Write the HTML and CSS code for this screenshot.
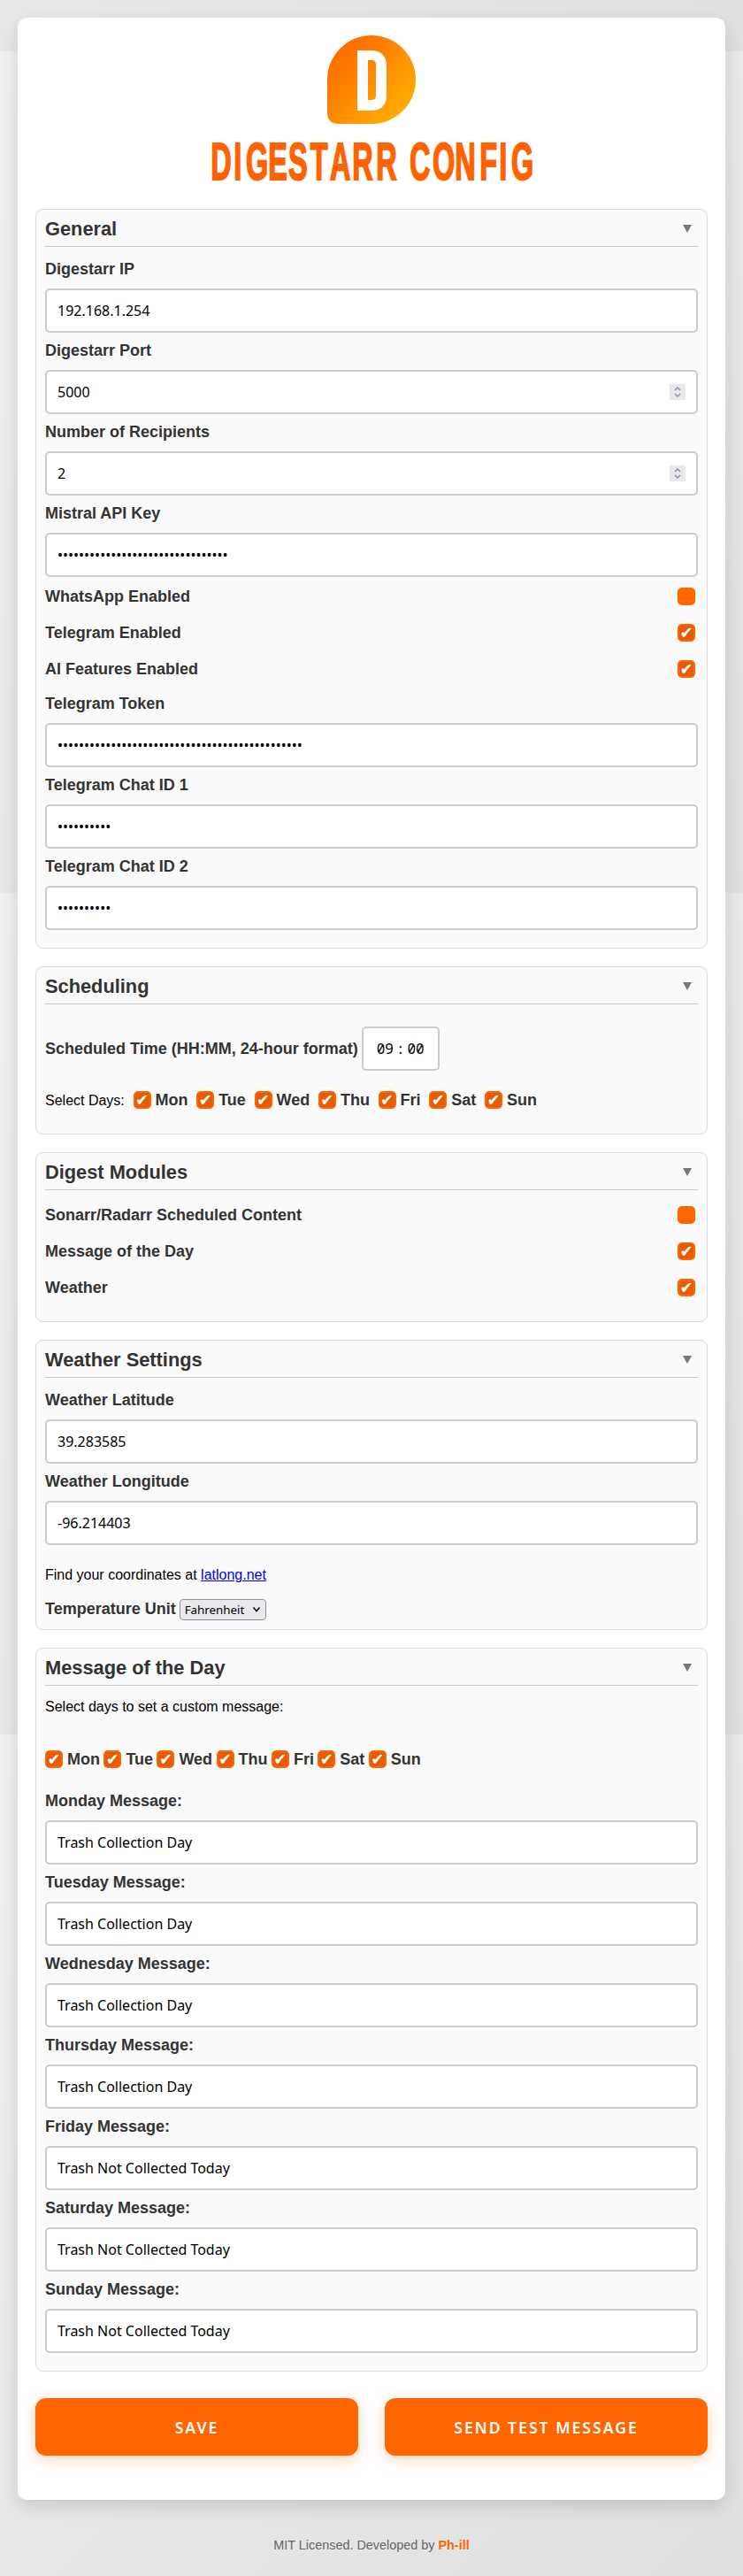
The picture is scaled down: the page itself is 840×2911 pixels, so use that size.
FILE: index.html
```html
<!DOCTYPE html>
<html lang="en">
<head>
<meta charset="utf-8">
<title>Digestarr Config</title>
<link rel="stylesheet" href="styles.css">
</head>
<body>
<main class="card">
  <svg class="logo" viewBox="0 0 100 100" width="100" height="100">
    <defs><linearGradient id="flame" x1="0" y1="0" x2="1" y2="1"><stop offset=".12" stop-color="#ff6a00"/><stop offset=".88" stop-color="#ffae00"/></linearGradient></defs>
    <path d="M50 0A50 50 0 0 1 50 100H13Q0 100 0 87V50A50 50 0 0 1 50 0Z" fill="url(#flame)"/>
    <path fill-rule="evenodd" d="M34 17H49Q67 17 67 35V67Q67 85 49 85H34ZM46 28V73H50Q55 73 55 68V33Q55 28 50 28Z" fill="#fff"/>
  </svg>
  <h1 class="title"><svg class="title-art" width="364" height="70" viewBox="0 -10 364 70"><text class="title-text" transform="scale(.55 1)" y="48" x=".5 47.8 72.7 118.7 160 205 245.5 291.5 340.5 380 409 456.5 502.4 553.3 593.3 618">DIGESTARR CONFIG</text></svg></h1>

  <section class="panel general">
    <h2 class="panel-head">General<span class="arrow"></span></h2>
    <label class="label">Digestarr IP</label><input class="field" value="192.168.1.254">
    <label class="label">Digestarr Port</label>
    <div class="field number">5000<svg class="spin" width="18" height="18"><path d="M6 7l3-3 3 3M6 11l3 3 3-3"/></svg></div>
    <label class="label">Number of Recipients</label>
    <div class="field number">2<svg class="spin" width="18" height="18"><path d="M6 7l3-3 3 3M6 11l3 3 3-3"/></svg></div>
    <label class="label">Mistral API Key</label><input class="field" value="••••••••••••••••••••••••••••••••">
    <div class="toggle"><span>WhatsApp Enabled</span><i class="check off"></i></div>
    <div class="toggle"><span>Telegram Enabled</span><i class="check"></i></div>
    <div class="toggle"><span>AI Features Enabled</span><i class="check"></i></div>
    <label class="label">Telegram Token</label><input class="field" value="••••••••••••••••••••••••••••••••••••••••••••••">
    <label class="label">Telegram Chat ID 1</label><input class="field" value="••••••••••">
    <label class="label">Telegram Chat ID 2</label><input class="field" value="••••••••••">
  </section>

  <section class="panel scheduling">
    <h2 class="panel-head">Scheduling<span class="arrow"></span></h2>
    <div class="time-row"><label>Scheduled Time (HH:MM, 24-hour format)</label><div class="time"><span>09</span><span>:</span><span>00</span></div></div>
    <div class="days spaced"><span class="hint">Select Days:</span>
      <label class="day"><i class="check"></i>Mon</label><label class="day"><i class="check"></i>Tue</label><label class="day"><i class="check"></i>Wed</label><label class="day"><i class="check"></i>Thu</label><label class="day"><i class="check"></i>Fri</label><label class="day"><i class="check"></i>Sat</label><label class="day"><i class="check"></i>Sun</label></div>
  </section>

  <section class="panel modules">
    <h2 class="panel-head">Digest Modules<span class="arrow"></span></h2>
    <div class="toggle"><span>Sonarr/Radarr Scheduled Content</span><i class="check off"></i></div>
    <div class="toggle"><span>Message of the Day</span><i class="check"></i></div>
    <div class="toggle"><span>Weather</span><i class="check"></i></div>
  </section>

  <section class="panel weather">
    <h2 class="panel-head">Weather Settings<span class="arrow"></span></h2>
    <label class="label">Weather Latitude</label><input class="field" value="39.283585">
    <label class="label">Weather Longitude</label><input class="field" value="-96.214403">
    <p class="find">Find your coordinates at <a href="#">latlong.net</a></p>
    <div class="unit"><label>Temperature Unit</label><div class="select">Fahrenheit<svg width="10" height="8"><path d="M1.5 1.5L5 5.5 8.500 1.500"/></svg></div></div>
  </section>

  <section class="panel messages">
    <h2 class="panel-head">Message of the Day<span class="arrow"></span></h2>
    <p class="prompt">Select days to set a custom message:</p>
    <div class="days">
      <label class="day"><i class="check"></i>Mon</label><label class="day"><i class="check"></i>Tue</label><label class="day"><i class="check"></i>Wed</label><label class="day"><i class="check"></i>Thu</label><label class="day"><i class="check"></i>Fri</label><label class="day"><i class="check"></i>Sat</label><label class="day"><i class="check"></i>Sun</label></div>
    <label class="label">Monday Message:</label><input class="field" value="Trash Collection Day">
    <label class="label">Tuesday Message:</label><input class="field" value="Trash Collection Day">
    <label class="label">Wednesday Message:</label><input class="field" value="Trash Collection Day">
    <label class="label">Thursday Message:</label><input class="field" value="Trash Collection Day">
    <label class="label">Friday Message:</label><input class="field" value="Trash Not Collected Today">
    <label class="label">Saturday Message:</label><input class="field" value="Trash Not Collected Today">
    <label class="label">Sunday Message:</label><input class="field" value="Trash Not Collected Today">
  </section>

  <div class="actions"><button class="button">SAVE</button><button class="button">SEND TEST MESSAGE</button></div>
</main>
<footer class="footer">MIT Licensed. Developed by <b>Ph-ill</b></footer>
</body>
</html>
```
FILE: styles.css
```css
* { box-sizing: border-box; }
body {
  margin: 0;
  height: 2911px;
  padding: 20px 20px 0;
  background: linear-gradient(135deg, #f0f0f0, #e0e0e0) 0 58px / 840px 951px repeat;
  font: 16px "Liberation Sans", Arial, sans-serif;
  color: #000;
}
.card {
  display: flex;
  flex-direction: column;
  height: 2805px;
  padding: 20px;
  border-radius: 10px;
  background: #fff;
  box-shadow: 0 8px 20px rgba(0, 0, 0, .13);
}
.logo { align-self: center; flex: none; }
.title { display: flex; justify-content: center; height: 70px; margin: 5px 0 21px; }
.title-art { overflow: visible; }
.title-text { font: bold 59px "Liberation Sans", Arial, sans-serif; fill: #ff6200; stroke: #ff6200; stroke-width: 2; }
.panel {
  flex: none;
  margin-bottom: 20px;
  padding: 0 10px;
  border: 1px solid #ddd;
  border-radius: 8px;
  background: #fafafa;
}
.general { height: 836px; }
.scheduling { height: 190px; }
.modules { height: 192px; }
.weather { height: 328px; }
.messages { height: 818px; margin-bottom: 30px; }
.panel-head {
  display: flex;
  justify-content: space-between;
  align-items: center;
  height: 42px;
  margin: 0 0 5px;
  padding-top: 2px;
  border-bottom: 1px solid #ccc;
  color: #333;
  font-size: 21.8px;
}
.arrow { margin-right: 7px; border: 5px solid transparent; border-top: 9px solid #777; border-bottom: 0; }
.label { display: flex; align-items: center; height: 42px; padding-bottom: 2px; color: #333; font-size: 18px; font-weight: bold; }
.field {
  display: flex;
  align-items: center;
  width: 100%;
  height: 50px;
  padding: 0 12px;
  border: 2px solid #ccc;
  border-radius: 5px;
  background: #fff;
  color: #000;
  font: 16px "Noto Sans", sans-serif;
}
.number { justify-content: space-between; }
.spin { background: #e9e9ed; fill: none; stroke: #8f8f9d; stroke-width: 1.5; }
.toggle { display: flex; justify-content: space-between; height: 41px; padding: 12px 3px 0 0; color: #333; font-size: 18px; font-weight: bold; line-height: 20px; }
.check {
  display: flex;
  justify-content: center;
  align-items: center;
  flex: none;
  width: 20px;
  height: 20px;
  border: 2px solid #ff6600;
  border-radius: 5px;
  background: #e65c00;
  color: #fff;
  font: normal 18px/16px "DejaVu Sans", sans-serif;
}
.check::after { content: "✔"; }
.off { background: #ff6600; }
.off::after { content: none; }
.time-row { display: flex; align-items: center; height: 50px; margin-top: 25px; gap: 4px; color: #333; font-size: 18px; font-weight: bold; }
.time {
  display: flex;
  justify-content: center;
  align-items: center;
  gap: 3px;
  width: 88px;
  height: 50px;
  border: 2px solid #ccc;
  border-radius: 5px;
  background: #fff;
  color: #000;
  font: 16px "Noto Sans Mono", "DejaVu Sans Mono", monospace;
}
.days { display: flex; align-items: center; height: 20px; gap: 4.4px; color: #333; font-size: 18px; font-weight: bold; }
.spaced { margin-top: 23px; gap: 9.7px; }
.hint { color: #000; font-size: 16px; font-weight: normal; padding-top: 1px; }
.day { display: flex; align-items: center; gap: 5px; line-height: 18px; }
.modules .panel-head { margin-bottom: 6px; }
.find { margin: 24px 0 0; line-height: 20px; }
.find a { color: #0000ee; }
.unit { display: flex; gap: 4px; margin-top: 17px; color: #333; font-size: 18px; font-weight: bold; line-height: 22px; }
.select {
  display: flex;
  align-items: center;
  justify-content: space-between;
  width: 98px;
  height: 24px;
  padding: 0 5px;
  border: 1px solid #8f8f9d;
  border-radius: 4px;
  background: #e9e9ed;
  color: #000;
  font: 13.333px "Noto Sans", sans-serif;
}
.select svg { fill: none; stroke: #000; stroke-width: 1.500; }
.prompt { margin: 14px 0 39px; line-height: 20px; }
.messages .days { margin-bottom: 17px; }
.actions { display: flex; gap: 30px; }
.button {
  flex: 1;
  height: 65px;
  padding: 0;
  border: 0;
  border-radius: 12px;
  background: #ff6600;
  box-shadow: 0 4px 15px rgba(255, 102, 0, .3);
  color: #fff;
  font: 600 17.600px "Noto Sans", sans-serif;
  letter-spacing: 2px;
}
.footer { margin-top: 42px; color: #666; font-size: 14.400px; line-height: 18px; text-align: center; }
.footer b { color: #ff6600; }
```
